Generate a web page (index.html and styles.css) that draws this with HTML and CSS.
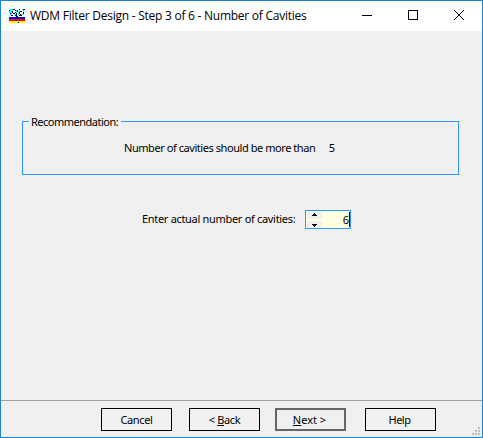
FILE: index.html
```html
<!DOCTYPE html>
<html lang="en">
<head>
<meta charset="utf-8">
<title>WDM Filter Design</title>
<link rel="stylesheet" href="styles.css">
</head>
<body>
<div class="window">
  <header class="titlebar">
    <svg class="app-icon" width="16" height="14" viewBox="0 0 16 14" shape-rendering="crispEdges">
      <path fill="#0ff" d="M1 0h3v2H1zM0 2h3v2H0zM1 4h2v2H1zM5 5h3v1H5zM7 1h1v3H7zM10 1h1v2h-1zM13 0h1v1h-1zM9 3h1v3H9zM12 5h3v1h-3zM14 1h1v2h-1z"/>
      <path fill="#000" d="M4 0h2v1H4zM6 1h1v1H6zM3 2h1v2H3zM4 4h2v1H4zM6 3h1v1H6zM0 1h1v1H0zM1 4h1v1H1zM2 6h2v1H2zM7 4h1v2H7zM8 1h1v2H8zM10 0h1v1h-1zM10 3h1v2h-1zM11 2h2v1h-2zM14 0h2v1h-2zM14 3h1v2h-1zM11 5h1v1h-1zM6 6h2v1H6zM10 6h3v1h-3zM7 7h2v1H7z"/>
      <path fill="#00f" d="M0 8h16v2H0z"/>
      <path fill="#f00" d="M0 10h16v2H0z"/>
      <path fill="#ff0" d="M0 12h16v2H0z"/>
      <path fill="#000" d="M8 8h1v1H8zM7 11h1v1H7zM9 13h1v1H9z"/>
    </svg>
    <h1 class="title">WDM Filter Design - Step 3 of 6 - Number of Cavities</h1>
    <div class="controls">
      <svg width="10" height="10" shape-rendering="crispEdges"><path fill="#000" d="M0 5h10v1H0z"/></svg>
      <svg width="10" height="10" shape-rendering="crispEdges"><path fill="none" stroke="#000" d="M.5.5h9v9h-9z"/></svg>
      <svg width="10" height="10"><path fill="none" stroke="#000" d="M0 0l10 10M10 0L0 10"/></svg>
    </div>
  </header>
  <main class="content">
    <section class="group">
      <h2 class="legend">Recommendation:</h2>
      <p class="advice"><span class="advice-text">Number of cavities should be more than</span><span>5</span></p>
    </section>
    <div class="entry">
      <span class="entry-label">Enter actual number of cavities:</span>
      <div class="spinner">
        <div class="arrows">
          <i><svg width="13" height="7" shape-rendering="crispEdges"><path d="M6 1h1v1H6zM5 2h3v1H5zM4 3h5v1H4z"/></svg></i>
          <i><svg width="13" height="7" shape-rendering="crispEdges"><path d="M4 3h5v1H4zM5 4h3v1H5zM6 5h1v1H6z"/></svg></i>
        </div>
        <span class="value">6</span>
      </div>
    </div>
  </main>
  <footer class="footer">
    <button class="btn">Cancel</button>
    <button class="btn back">&lt; <u>B</u>ack</button>
    <button class="btn next"><u>N</u>ext &gt;</button>
    <button class="btn help">Help</button>
    <svg class="grip" width="8" height="8" shape-rendering="crispEdges"><path fill="#bfbfbf" d="M6 0h2v2H6zM3 3h2v2H3zM6 3h2v2H6zM0 6h2v2H0zM3 6h2v2H3zM6 6h2v2H6z"/></svg>
  </footer>
</div>
</body>
</html>
```
FILE: styles.css
```css
* { box-sizing: border-box; margin: 0; padding: 0; }
body { width: 483px; height: 438px; overflow: hidden; font: 11px/14px "Noto Sans", "Open Sans", sans-serif; color: #000; }
.window { width: 483px; height: 438px; border: 1px solid #1883d7; background: #f0f0f0; display: flex; flex-direction: column; }
.titlebar { height: 30px; background: #fff; display: flex; padding-left: 8px; flex: none; }
.app-icon { margin-top: 8px; }
.title { margin: 7px 0 0 5px; font: 12px/16px "Open Sans", "Noto Sans", sans-serif; letter-spacing: -0.25px; white-space: nowrap; }
.controls { display: flex; gap: 36px; margin: 9px 18px 0 auto; }
.content { flex: 1; padding: 90px 23px 0 21px; }
.group { height: 54px; border: 1px solid #3399ff; }
.legend { font: inherit; letter-spacing: -0.5px; height: 14px; margin: -7px 0 0 6px; width: 92px; padding-left: 2px; background: #f0f0f0; white-space: nowrap; }
.advice { display: flex; justify-content: space-between; margin: 12px 0 0 101px; width: 211px; white-space: nowrap; }
.advice-text { letter-spacing: -0.44px; }
.entry { display: flex; margin: 35px 0 0 120px; white-space: nowrap; }
.entry-label { width: 163px; padding-top: 2px; letter-spacing: -0.31px; }
.spinner { width: 46px; height: 19px; border: 1px solid #3399ff; background: #ffffe1; display: flex; padding: 1px 0 0 1px; }
.arrows { display: flex; flex-direction: column; gap: 2px; width: 15px; }
.arrows i { height: 7px; background: #f0f0f0; display: flex; justify-content: center; }
.value { margin-left: auto; height: 15px; border-right: 1px solid #000; line-height: 16px; }
.footer { height: 37px; border-top: 1px solid #a0a0a0; display: flex; padding: 7px 2px 0 100px; flex: none; }
.btn { width: 71px; height: 23px; border: 1px solid #000; background: #f0f0f0; font: inherit; letter-spacing: -0.35px; white-space: nowrap; color: #000; }
.back { margin-left: 17px; }
.next { margin-left: 15px; border: 2px solid #666; letter-spacing: 0; padding-right: 2px; }
.help { margin-left: 19px; letter-spacing: -0.5px; padding-right: 2px; }
u { text-underline-offset: 1px; }
.grip { margin: 19px 0 0 auto; }
```
